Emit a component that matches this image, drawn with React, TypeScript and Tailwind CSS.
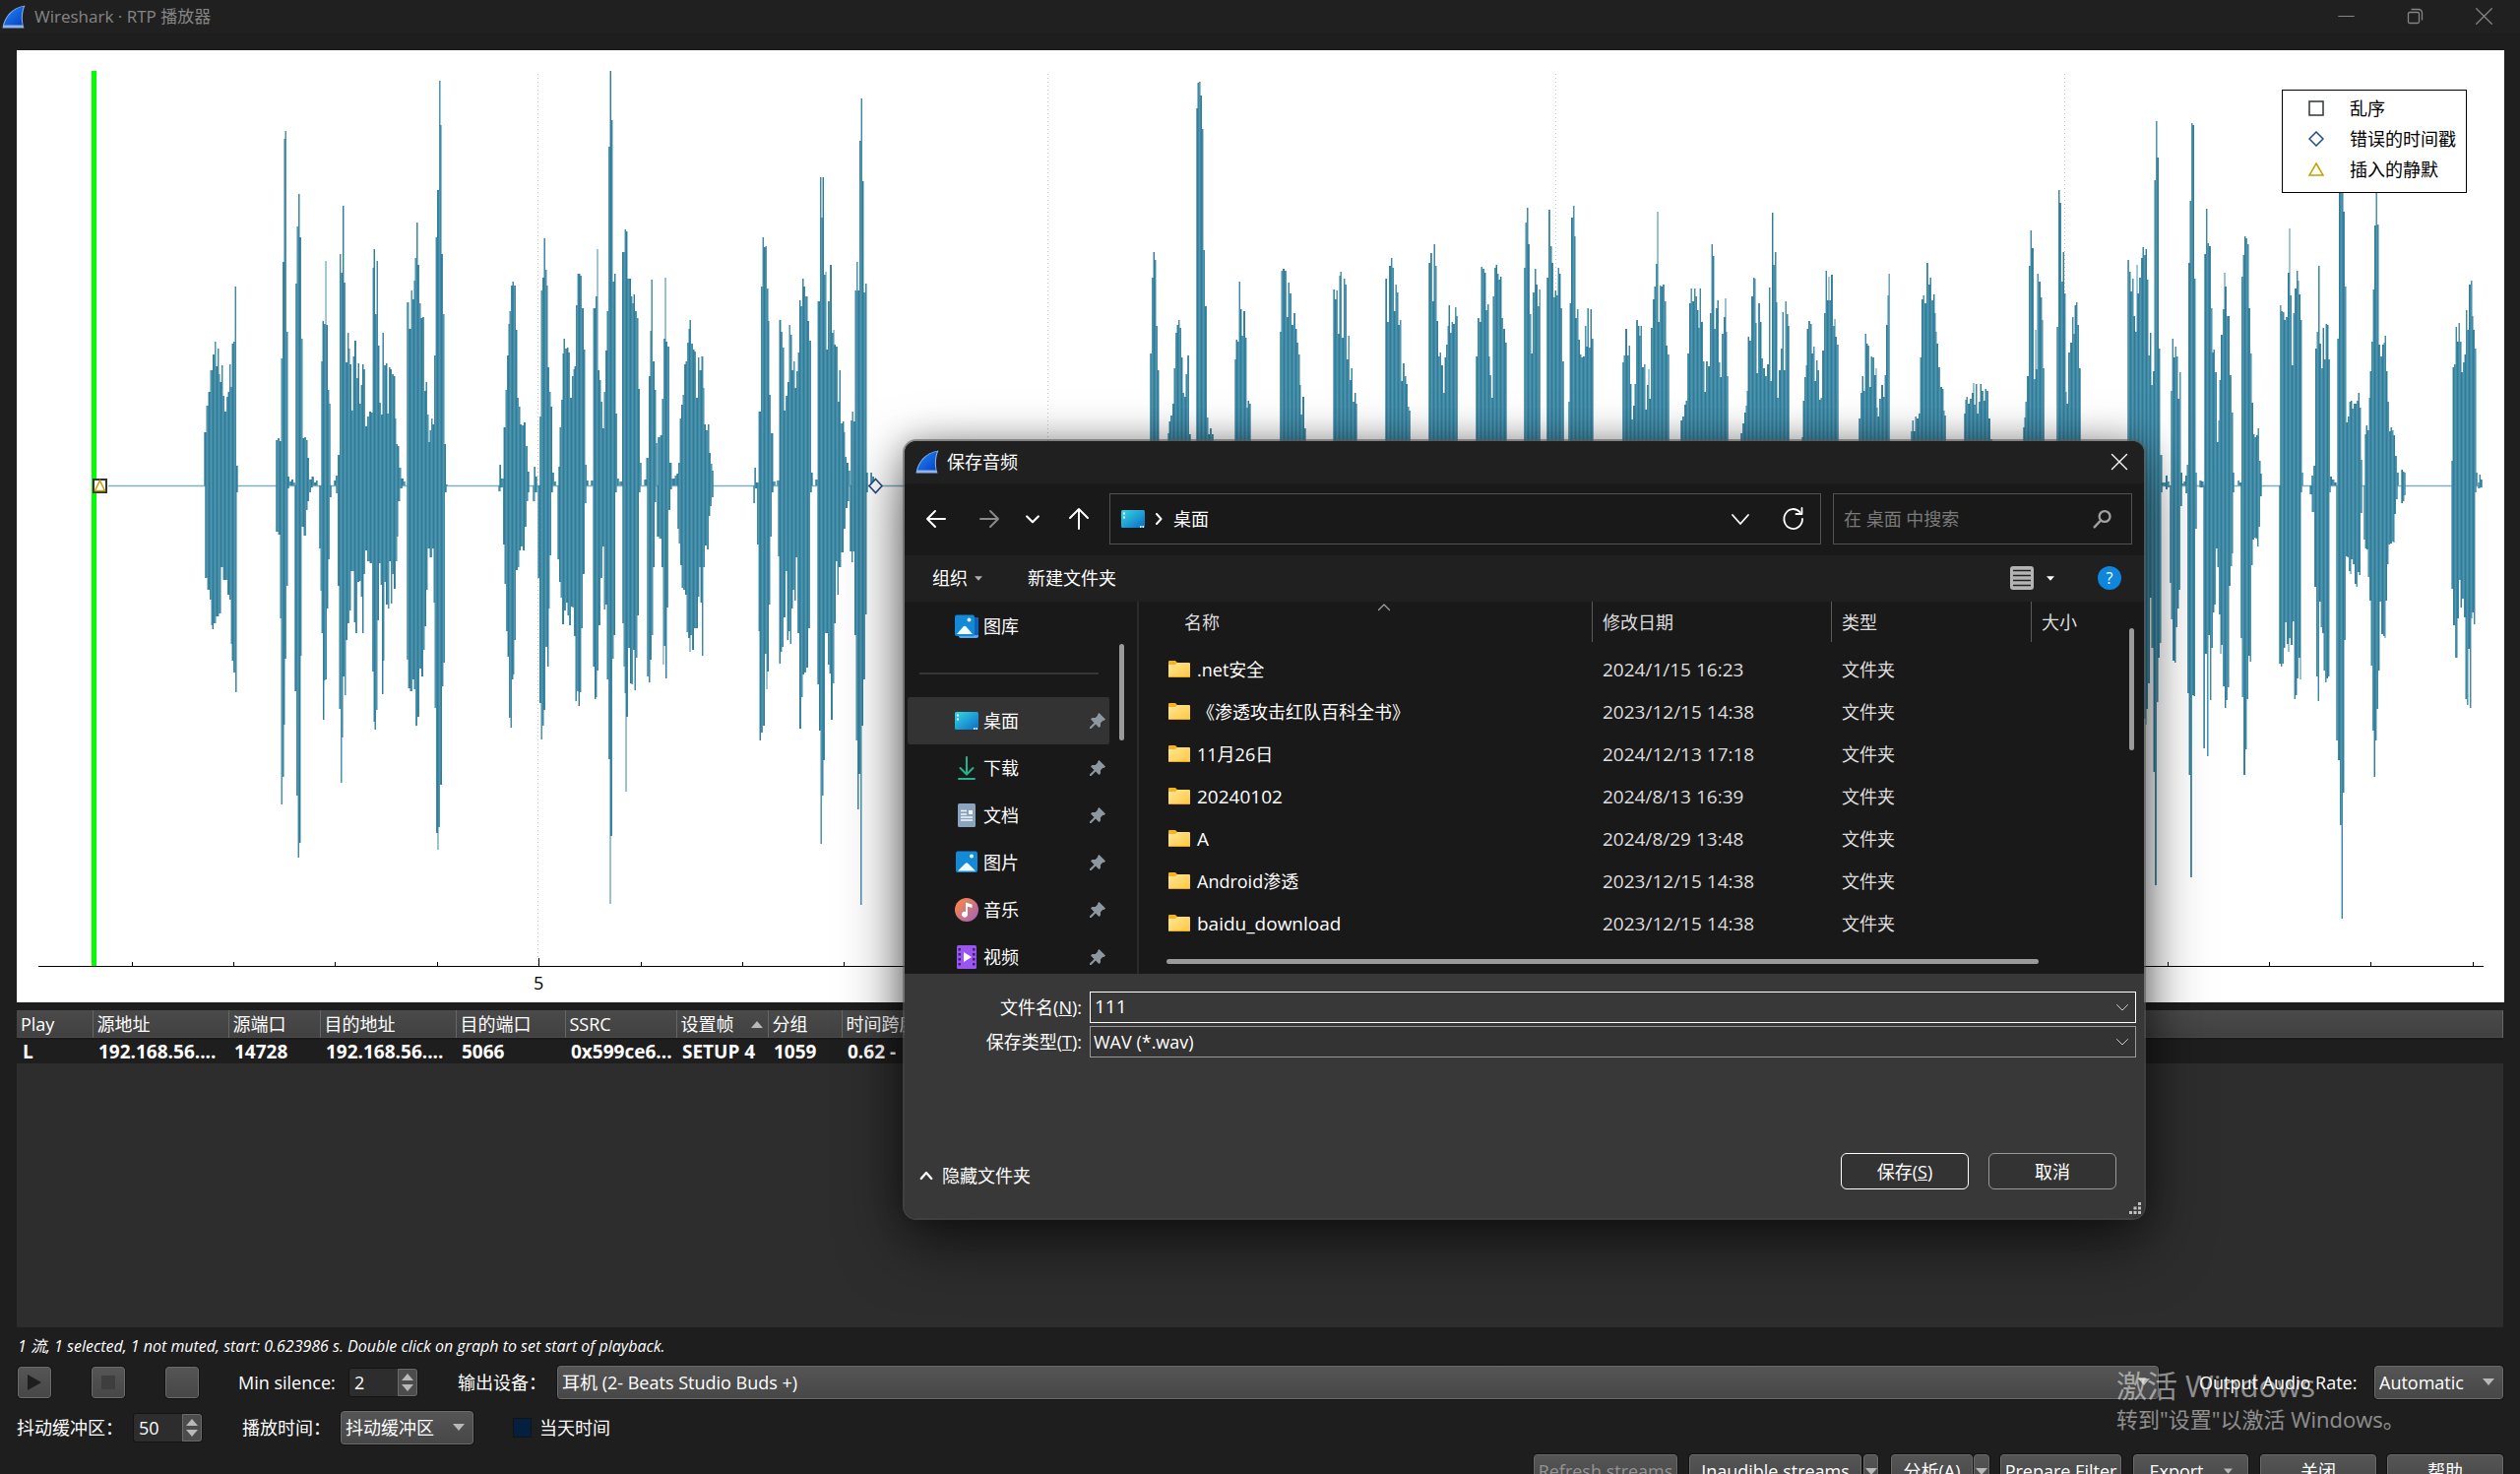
import React from "react";

/* ---------- Audio wave form ---------- */

const BASELINE = 493;

/* Peaks of each burst, above and below the base line, as "x,y" pairs. */
const BURSTS: [string, string][] = [
  [
    "208,439 211,412 212,398 215,376 217,360 219,347 220,372 222,354 223,380 224,388 226,371 227,402 229,418 231,403 232,398 234,370 235,393 236,349 238,347 239,291 241,473",
    "209,587 212,599 214,609 215,635 216,639 218,633 221,626 224,623 225,576 228,589 230,589 232,604 234,609 235,654 236,671 238,683 240,703 241,500",
  ],
  [
    "281,447 283,445 285,448 286,364 288,266 289,141 290,133 292,337 293,484 295,489 297,487 299,490",
    "281,540 284,543 285,628 286,817 288,789 289,736 290,669 292,595 293,496",
  ],
  [
    "301,288 302,230 304,197 305,241 307,344 308,445 310,444 312,447 313,465 315,487 318,484 320,490 322,488",
    "300,702 302,808 303,871 305,856 306,666 307,535 310,544 312,518 313,509 315,500 317,495",
  ],
  [
    "327,367 328,326 330,329 331,265 332,330 334,396 335,410",
    "325,557 326,600 327,643 329,731 330,691 331,690 333,618 334,568 336,505",
  ],
  [
    "340,488 342,483 344,462 346,258 347,277 349,209 350,287 352,368 354,338 355,354 356,370 358,417 359,362 361,346 363,384 364,369 366,410 367,391 369,370 370,375 372,433 374,423 376,418 378,419 379,272 380,253 382,319 383,265 385,351 386,409 388,421 389,338 391,371 393,369 394,420 396,373 397,375 399,380 401,382 402,425 403,451 405,453 406,475 409,486 411,489",
    "342,501 344,595 345,720 347,795 348,749 349,687 351,706 352,650 354,633 356,620 357,580 359,580 360,632 362,643 364,591 366,590 367,606 369,643 370,583 372,559 374,570 377,572 379,682 380,733 381,741 383,721 384,630 386,572 387,594 389,705 390,671 391,591 393,614 395,618 396,570 398,613 399,583 401,598 403,570 404,545 405,509 408,496",
  ],
  [
    "414,307 417,334 418,295 420,304 421,285 422,262 424,226 425,269 427,308 428,323 430,322 432,397 433,388 435,421 436,449 437,437 439,425 440,431 442,361 443,241 445,193 447,82 448,127 449,258 451,319 452,451 454,492",
    "414,670 415,699 418,702 420,690 421,700 423,737 425,728 427,679 429,687 431,660 432,636 434,599 435,557 438,566 440,557 441,612 442,719 444,846 445,863 446,840 448,797 450,697 451,673 453,500",
  ],
  [
    "508,472 510,486 513,434 514,396 516,361 517,329 518,316 520,290 521,286 523,290 525,335 526,404 528,413 529,431 531,432 533,429 535,453 537,479",
    "507,499 510,495 512,553 513,593 515,641 516,667 518,729 519,739 521,690 522,685 523,650 525,579 527,576 528,559 530,555 532,559 534,535 536,509 537,500",
  ],
  ["543,474 545,484", "542,509 545,500"],
  [
    "549,423 550,295 552,282 553,242 555,274 556,290 557,373 559,398 560,413 562,480 564,489",
    "547,587 549,714 550,751 552,737 553,721 555,657 557,677 558,618 559,564 561,500",
  ],
  [
    "568,474 569,434 571,406 572,359 573,344 575,354 577,353 578,358 580,404 582,382 583,375 584,372 586,310 587,278 589,278 590,280 592,313 594,355 595,472 597,488",
    "567,568 569,591 570,607 572,634 574,620 576,612 577,625 579,635 581,616 582,617 584,646 585,712 587,702 588,717 590,703 591,638 593,583 595,511",
  ],
  [
    "601,488 604,313 606,301 607,253 608,376 610,386 611,408 613,435 614,398 616,356 617,316 619,149 620,72 622,122 623,286 625,278 626,420 628,486",
    "603,677 605,710 606,708 607,681 609,635 611,587 613,555 614,619 616,614 617,690 619,771 620,918 621,849 623,669 624,645 626,500",
  ],
  [
    "630,489 634,256 635,233 637,235 638,283 640,283 642,301 643,308 644,299 646,316 648,323 649,395 651,470",
    "633,633 634,677 635,704 636,804 637,728 639,658 641,694 642,695 644,660 645,701 647,668 648,625 650,500",
  ],
  [
    "655,487 658,465 660,382 661,336 662,284 664,367 666,396 667,450",
    "658,687 660,693 661,670 663,645 664,576 666,510",
  ],
  [
    "669,444 672,442 673,405 675,344 676,282 677,347 679,352 681,470 684,486 687,483",
    "668,545 671,547 673,576 674,675 675,656 677,689 678,617 680,518 682,497",
  ],
  [
    "688,481 690,470 691,425 693,411 694,401 696,370 697,367 699,348 700,334 701,325 703,349 705,355 706,357 708,404 710,363 711,376 714,362 715,394 716,431 718,437 720,431 721,460 723,471 724,478",
    "689,537 690,552 692,574 693,597 695,599 697,604 698,642 700,648 701,662 702,645 704,660 706,638 708,638 710,606 711,576 712,612 714,666 715,576 717,554 719,558 721,524 722,514 724,505",
  ],
  [
    "767,475 769,490 772,418 774,291 775,241 777,251 778,250 780,293 781,326 782,401 784,440 787,489",
    "766,511 768,496 770,553 771,641 772,752 774,744 776,737 778,664 779,700 780,682 782,614 783,545 785,500",
  ],
  [
    "790,488 793,325 794,337 796,353 797,417 799,402 801,388 802,330 804,340 805,376 807,367 808,394 810,377 811,358 813,305 814,311 816,283 817,291 819,301 820,301 821,326 823,346 825,480",
    "791,565 792,674 794,662 795,657 797,627 799,580 800,650 802,641 803,654 805,618 806,599 808,610 809,566 811,643 813,740 815,708 816,685 818,683 820,678 822,638 824,500",
  ],
  [
    "829,487 832,306 834,180 835,221 836,180 838,279 839,276 840,355 842,306 844,269 846,338 847,335 848,350 850,352 852,408 853,376 855,430 857,428 858,439 859,464 861,470 863,478",
    "831,695 833,742 834,857 836,808 837,772 839,643 840,643 842,675 843,684 845,731 847,694 848,633 850,570 851,604 853,576 856,561 858,537 860,516 862,509",
  ],
  [
    "865,427 866,418 868,428 869,295 871,266 872,295 874,143 875,100 877,184 878,297 880,288 881,480",
    "864,560 866,571 867,560 869,645 870,752 872,822 873,786 875,919 876,737 878,690 880,624 881,500",
  ],
  ["885,480 887,484 889,488", "885,496 889,496"],
  ["1169,359 1171,282 1172,256 1174,264 1175,331 1177,376 1178,450", "1169,540 1178,540"],
  [
    "1187,440 1188,428 1190,422 1192,410 1193,374 1195,338 1196,330 1198,325 1199,333 1201,363 1202,399 1204,403 1205,380 1207,361 1209,441",
    "1187,540 1209,540",
  ],
  [
    "1216,110 1217,84 1219,83 1220,97 1222,131 1223,254 1225,311 1227,424 1228,441 1230,435 1232,441",
    "1216,540 1232,540",
  ],
  [
    "1255,365 1256,345 1258,347 1259,286 1261,314 1262,341 1264,316 1266,343 1267,414 1268,407 1270,410",
    "1255,540 1270,540",
  ],
  [
    "1301,337 1302,275 1304,273 1306,275 1308,322 1309,287 1311,298 1313,330 1315,318 1317,334 1318,348 1320,360 1321,391 1322,421 1324,403 1326,435",
    "1301,540 1326,540",
  ],
  [
    "1355,294 1357,304 1358,295 1360,339 1361,280 1362,276 1364,343 1366,283 1367,289 1369,365 1370,341 1372,386 1373,374 1375,408 1377,399 1378,410",
    "1355,540 1378,540",
  ],
  [
    "1408,283 1410,327 1412,270 1414,262 1415,272 1417,316 1418,289 1420,297 1421,330 1423,325 1424,387 1426,369 1428,382 1429,390 1431,413 1432,417",
    "1408,540 1432,540",
  ],
  [
    "1452,267 1454,257 1456,306 1457,248 1459,270 1460,326 1462,362 1463,358 1465,371 1467,399 1468,363 1470,350 1471,331 1472,310 1474,338 1475,327 1477,329 1479,312 1480,321",
    "1452,540 1480,540",
  ],
  [
    "1500,362 1502,323 1504,327 1505,271 1507,273 1509,277 1510,315 1512,309 1513,362 1514,381 1516,404 1517,301 1519,272 1520,269 1522,278 1523,284 1525,281 1526,323 1528,334 1530,348",
    "1500,540 1530,540",
  ],
  [
    "1549,272 1550,226 1552,211 1553,248 1555,319 1556,359 1558,297 1560,273 1561,289 1563,311 1564,294",
    "1549,540 1564,540",
  ],
  [
    "1572,282 1574,213 1576,250 1577,267 1579,302 1580,295 1582,300 1583,272 1585,278 1586,313 1588,367",
    "1572,540 1588,540",
  ],
  [
    "1594,408 1595,308 1597,221 1599,209 1600,240 1601,323 1603,314 1604,345 1606,360 1607,363 1609,362 1611,331 1612,352 1613,313 1615,353 1616,314 1618,344",
    "1594,540 1618,540",
  ],
  [
    "1649,368 1650,361 1652,334 1654,361 1655,351 1657,390 1658,426 1660,412 1661,390 1663,325 1665,331 1666,341 1667,331 1669,373 1671,370 1672,416 1674,391 1675,375 1676,405 1678,333 1680,304 1681,291 1683,268 1684,215 1685,327 1687,290 1688,291 1690,289 1692,306 1693,351 1695,360",
    "1649,540 1695,540",
  ],
  [
    "1708,427 1710,423 1712,411 1713,407 1715,359 1717,308 1718,293 1720,306 1722,293 1723,301 1725,315 1726,333 1727,293 1729,327 1731,367 1732,398 1734,367 1736,372 1738,318 1739,248 1741,260 1742,334 1744,313 1745,305 1747,368 1748,383 1750,339 1752,322 1753,303 1754,337 1755,382",
    "1708,540 1755,540",
  ],
  [
    "1769,440 1771,430 1773,419 1774,412 1775,397 1776,342 1778,346 1780,301 1782,282 1783,283 1784,328 1785,379 1787,308 1789,327 1790,364 1792,374 1794,382 1796,370 1798,292 1799,387 1801,216 1802,269 1804,256 1805,307 1806,404 1808,376 1810,354 1811,317 1813,376 1814,306 1816,319 1817,331",
    "1769,540 1817,540",
  ],
  [
    "1831,444 1832,407 1834,383 1835,371 1836,334 1838,326 1840,329 1841,359 1843,352 1844,387 1846,366 1847,376 1849,406 1850,404 1852,356 1854,318 1855,275 1857,305 1858,281 1859,305 1861,279 1863,331 1864,324 1865,342 1867,350",
    "1831,540 1867,540",
  ],
  [
    "1889,425 1891,399 1892,382 1894,397 1895,339 1897,349 1898,351 1900,393 1901,362 1903,363 1905,381 1906,374 1907,414 1908,423 1910,405 1912,391 1914,403 1915,381 1917,330 1918,300 1919,278",
    "1889,540 1919,540",
  ],
  [
    "1942,438 1943,427 1945,438 1946,423 1948,425 1950,420 1951,363 1953,304 1954,300 1956,308 1958,267 1960,289 1961,282 1963,305 1965,299 1966,318 1967,337 1968,349 1970,373 1972,393 1974,395 1975,417 1976,422",
    "1942,540 1976,540",
  ],
  [
    "1996,420 1997,406 1998,403 2000,410 2002,405 2004,399 2005,389 2006,411 2008,390 2009,420 2011,408 2012,390 2014,397 2016,407 2017,395 2019,397 2021,425 2023,446",
    "1996,540 2023,540",
  ],
  [
    "2056,434 2057,424 2058,408 2060,382 2062,270 2063,234 2065,252 2067,385 2068,335 2069,375 2070,278 2072,286 2074,302 2075,325 2076,374",
    "2056,540 2076,540",
  ],
  [
    "2090,332 2092,193 2093,206 2095,286 2096,256 2098,298 2099,398 2100,410 2102,358 2104,348 2106,322 2107,339 2108,310 2110,307 2111,330 2113,374",
    "2090,540 2113,540",
  ],
  [
    "2162,264 2164,276 2165,296 2167,283 2168,321 2170,337 2171,269 2172,298 2174,282 2176,262 2177,251 2179,259 2180,253 2182,284 2183,361 2185,338 2186,391 2188,377 2189,183 2191,123 2192,160 2194,354 2195,462 2198,490",
    "2162,700 2177,710 2179,730 2180,736 2181,720 2183,694 2185,607 2186,658 2187,658 2188,784 2190,899 2192,713 2193,668 2195,653 2196,500",
  ],
  ["2199,490 2201,483 2203,489", "2199,494 2201,497 2203,495"],
  [
    "2206,397 2207,344 2209,363 2210,352 2212,362 2213,405 2215,378 2216,480 2218,491",
    "2205,592 2206,629 2208,671 2210,673 2211,637 2213,618 2214,599 2216,514",
  ],
  [
    "2219,489 2221,483 2222,472 2224,267 2225,204 2227,125 2228,127 2230,283 2231,480",
    "2221,501 2223,704 2224,787 2226,891 2228,706 2229,707 2231,537",
  ],
  ["2235,488 2238,489", "2235,495 2238,495"],
  [
    "2240,258 2242,212 2243,247 2245,250 2247,313 2248,358 2249,355 2251,378 2253,449 2254,427 2255,386 2257,340 2259,314 2260,277 2261,291 2263,321 2264,321 2266,381 2268,419 2269,480",
    "2239,760 2241,664 2243,768 2244,645 2246,711 2247,658 2249,622 2250,614 2252,557 2253,576 2255,624 2256,664 2257,655 2259,697 2261,719 2262,711 2264,698 2265,595 2267,575 2268,562 2269,500",
  ],
  [
    "2274,488 2276,490 2278,281 2279,259 2281,240 2282,242 2284,248 2285,313 2287,359 2288,409 2290,441 2291,444 2293,442 2294,435 2296,468 2297,481",
    "2277,648 2278,708 2280,787 2282,761 2283,710 2285,666 2286,672 2288,574 2289,548 2291,546 2292,547 2294,555 2295,535 2297,504",
  ],
  [
    "2317,310 2318,316 2320,317 2321,325 2323,322 2325,277 2326,232 2327,300 2329,371 2330,318 2332,293 2334,275 2335,285 2336,299 2338,325 2339,480",
    "2316,674 2318,677 2319,674 2321,658 2322,632 2324,654 2325,662 2326,648 2328,655 2330,631 2331,710 2333,706 2334,689 2336,668 2337,690 2338,500",
  ],
  [
    "2349,483 2351,473 2353,354 2354,337 2356,270 2357,349 2359,374 2360,333 2362,365 2363,329 2365,330 2366,365 2368,484 2370,487 2373,490",
    "2347,502 2350,520 2352,596 2354,687 2355,712 2357,611 2358,637 2360,643 2361,681 2363,693 2364,689 2366,687 2367,500",
  ],
  [
    "2375,344 2377,150 2379,140 2380,150 2381,215 2383,291 2384,429 2386,423 2387,408 2389,407 2390,415 2392,410 2393,410 2395,407 2396,399 2398,414 2399,467",
    "2374,752 2376,772 2378,838 2379,933 2381,805 2382,650 2384,565 2385,566 2387,580 2388,583 2389,568 2391,573 2393,593 2394,596 2396,581 2397,584 2399,521",
  ],
  [
    "2403,441 2404,432 2406,437 2407,404 2408,377 2410,347 2411,294 2413,229 2414,165 2416,228 2417,350 2419,362 2421,350 2422,348 2423,341 2425,377 2426,408 2428,438 2429,434 2431,437 2432,442 2434,463 2436,480",
    "2402,548 2403,557 2405,558 2406,586 2408,610 2409,676 2411,742 2412,789 2414,752 2415,720 2417,681 2418,611 2420,644 2422,646 2423,648 2424,610 2426,573 2427,553 2429,552 2431,550 2432,551 2433,522 2435,507",
  ],
  ["2440,477 2442,479 2443,480", "2440,511 2442,509 2443,503"],
  [
    "2491,468 2492,373 2494,370 2495,332 2497,347 2498,328 2500,347 2501,378 2503,368 2504,360 2506,315 2507,335 2509,289 2511,285 2512,321 2513,335 2515,354 2516,480",
    "2491,598 2493,635 2495,668 2496,668 2497,628 2499,589 2500,617 2502,608 2504,627 2505,710 2507,716 2508,659 2510,719 2511,628 2512,622 2514,634 2515,500",
  ],
  ["2518,490 2519,482 2521,487", "2518,496 2521,495"],
];

/* Turns a list of peaks into a run of bars that stand on the base line. */
function bars(peaks: string): string {
  const p = peaks.split(" ").map((s) => s.split(",").map(Number));
  let d = `M${p[0][0] - 0.75} ${BASELINE}`;
  p.forEach(([x, y], i) => {
    const right = i + 1 < p.length ? (x + p[i + 1][0]) / 2 : x + 0.75;
    d += `V${y}H${right}`;
  });
  return d + `V${BASELINE}Z`;
}

const WAVE = BURSTS.map(([top, bottom]) => bars(top) + bars(bottom)).join("");

const TICKS = Array.from({ length: 24 }, (_, i) => Math.round(133.5 + i * 103.4));
const GRID = [546, 1064, 1580, 2097];

function Chart() {
  return (
    <div className="relative mx-[17px] mr-4 h-[967px] shrink-0 bg-white">
      <svg className="block h-full w-full" viewBox="17 51 2527 967" preserveAspectRatio="none" role="img" aria-label="Wave form">
        <defs>
          <pattern id="stripes" width="4" height="8" patternUnits="userSpaceOnUse">
            <rect width="4" height="8" fill="#3f89a5" />
            <rect width="1" height="8" fill="#307d9b" />
            <rect x="2" width="1" height="8" fill="#5095ae" />
          </pattern>
        </defs>
        {GRID.map((x) => (
          <line key={x} x1={x + 0.5} x2={x + 0.5} y1="75" y2="981" stroke="#c4c4c4" strokeDasharray="1 3" />
        ))}
        <path d={`M110 ${BASELINE + 0.5}H2520`} stroke="#7db0c2" strokeWidth="1.5" />
        <path d={WAVE} fill="url(#stripes)" />
        <rect x="93" y="72" width="5" height="909" fill="#00ff00" />
        <path d="M39 981.5H2523" stroke="#000" />
        {TICKS.map((x) => (
          <path key={x} d={`M${x + 0.5} 981V${GRID.some((g) => Math.abs(g - x) < 3) ? 973 : 977}`} stroke="#000" />
        ))}
        <g fill="#fff">
          <rect x="95" y="487" width="13" height="13" stroke="#2e3436" strokeWidth="2" />
          <path d="M101.500 488L106.500 498.500H96.500Z" stroke="#c4a000" strokeWidth="1.500" />
          <path d="M889.500 486.500L896 493.500L889.500 500.500L883 493.500Z" stroke="#204a87" strokeWidth="1.600" />
        </g>
      </svg>
      <span className="absolute bottom-2 left-[525px] text-[18px] leading-6 text-black">5</span>
      <ul className="absolute right-[38px] top-10 flex h-[105px] flex-col justify-start gap-[3px] border border-black bg-white pl-[26px] pr-[10px] pt-1 text-[18px] leading-7 text-black">
        <li className="flex items-center gap-[26px]">
          <svg className="size-4" viewBox="0 0 16 16" fill="none"><rect x="1" y="1" width="14" height="14" stroke="#2e3436" strokeWidth="1.5" /></svg>
          乱序
        </li>
        <li className="flex items-center gap-[26px]">
          <svg className="size-4" viewBox="0 0 16 16" fill="none"><path d="M8 1L15 8L8 15L1 8Z" stroke="#204a87" strokeWidth="1.5" /></svg>
          错误的时间戳
        </li>
        <li className="flex items-center gap-[26px]">
          <svg className="size-4" viewBox="0 0 16 16" fill="none"><path d="M8 2L15 14H1Z" stroke="#c4a000" strokeWidth="1.5" /></svg>
          插入的静默
        </li>
      </ul>
    </div>
  );
}

/* ---------- Icons ---------- */

function Fin({ className }: { className: string }) {
  return (
    <svg className={className} viewBox="0 0 24 24">
      <defs>
        <linearGradient id="fin" x1="0" y1="0" x2="1" y2="1">
          <stop offset="0" stopColor="#1f8bff" />
          <stop offset="1" stopColor="#0a3fbf" />
        </linearGradient>
      </defs>
      <path d="M0.500 23.500C2 13 9 2.500 23.500 0.500C20.500 7 20 16 22.500 23.500Z" fill="#8fb4e8" />
      <path d="M2 20.500C4.500 11.500 11 3.500 22 1.500C19.500 8 19.300 15 20.800 20.500Z" fill="url(#fin)" />
    </svg>
  );
}

function Stroke({ d, className, w = 1.5 }: { d: string; className: string; w?: number }) {
  return (
    <svg className={className} viewBox="0 0 24 24" fill="none" stroke="currentColor" strokeWidth={w} strokeLinecap="round" strokeLinejoin="round">
      <path d={d} />
    </svg>
  );
}

function Caret({ up = false, className = "" }: { up?: boolean; className?: string }) {
  return (
    <svg className={`h-[7px] w-3 ${className}`} viewBox="0 0 12 7" fill="currentColor">
      <path d={up ? "M6 0L12 7H0Z" : "M0 0H12L6 7Z"} />
    </svg>
  );
}

function DesktopIcon() {
  return (
    <svg className="h-[18px] w-6" viewBox="0 0 24 18">
      <defs>
        <linearGradient id="desk" x1="0" y1="0" x2="1" y2="1">
          <stop offset="0" stopColor="#36d6e2" />
          <stop offset="1" stopColor="#0b6cc4" />
        </linearGradient>
      </defs>
      <rect width="24" height="18" rx="1.500" fill="url(#desk)" />
      <path d="M2 2.500h2v2H2zM2 6.500h2v2H2zM19 16h1.500v2H19zM21.500 16H23v2h-1.500z" fill="#e9fbff" />
    </svg>
  );
}

function PictureIcon({ stacked = false }: { stacked?: boolean }) {
  return (
    <svg className="size-6" viewBox="0 0 24 24">
      {stacked && <path d="M4 20h16V3h2a2 2 0 0 1 2 2v17a2 2 0 0 1-2 2H6a2 2 0 0 1-2-2z" fill="#5ba7ea" />}
      {stacked && <path d="M20 3h2a2 2 0 0 1 2 2v16h-4z" fill="#0f62b5" />}
      <rect x={stacked ? 0 : 1} y="0.500" width={stacked ? 20 : 22} height="21.500" rx="2" fill="#1489d8" />
      <path d={stacked ? "M2 20L8.500 12.500Q10 11 11.500 12.500L18 20Z" : "M3 20.500L10.500 13Q12 11.500 13.500 13L21 20.500Z"} fill="#f2f9ff" />
      <circle cx={stacked ? 14.500 : 17} cy="5.500" r="2" fill="#e6f5ff" />
    </svg>
  );
}

function DownloadIcon() {
  return (
    <svg className="size-6" viewBox="0 0 24 24" fill="none" stroke="#20b58f" strokeWidth="2" strokeLinecap="round" strokeLinejoin="round">
      <path d="M12 1V18M5.500 12L12 18.500L18.500 12M4 23H20" />
    </svg>
  );
}

function DocIcon() {
  return (
    <svg className="size-6" viewBox="0 0 24 24">
      <rect x="3" width="18" height="24" rx="1.500" fill="#8aa3bf" />
      <path d="M6 7.500h6M6 11h6M6 14h12M6 17h12" stroke="#f3f7fb" strokeWidth="1.300" />
      <path d="M14 7h4v4h-4z" fill="#f3f7fb" />
    </svg>
  );
}

function MusicIcon() {
  return (
    <svg className="size-6" viewBox="0 0 24 24">
      <defs>
        <linearGradient id="music" x1="0" y1="0" x2="1" y2="1">
          <stop offset="0.200" stopColor="#ef8354" />
          <stop offset="1" stopColor="#9d5fc0" />
        </linearGradient>
      </defs>
      <circle cx="12" cy="12" r="12" fill="url(#music)" />
      <path d="M11 4.500L17.500 6.500V10L13 8.700V16.500A3 3 0 1 1 11 13.900Z" fill="#fff" />
    </svg>
  );
}

function VideoIcon() {
  return (
    <svg className="size-6" viewBox="0 0 24 24">
      <rect x="2" width="20" height="24" rx="1.500" fill="#9c56f0" />
      <path d="M3.500 3h2.500v2.500H3.500zM3.500 8h2.500v2.500H3.500zM3.500 13h2.500v2.500H3.500zM3.500 18h2.500v2.500H3.500zM18 3h2.500v2.500H18zM18 8h2.500v2.500H18zM18 13h2.500v2.500H18zM18 18h2.500v2.500H18z" fill="#3b1d78" />
      <path d="M9 7L17 12L9 17Z" fill="#fff" />
    </svg>
  );
}

function Pin() {
  return (
    <svg className="size-4" viewBox="0 0 16 16" fill="#8d979f">
      <path d="M9.500 0L16 6.500L14.500 8L13.500 7.800L11 10.300L11 13.500L9.500 15L6 11.500L1.500 16H0V14.500L4.500 10L1 6.500L2.500 5L5.700 5L8.200 2.500L8 1.500Z" />
    </svg>
  );
}

function Folder() {
  return (
    <svg className="h-[17px] w-[22px]" viewBox="0 0 22 17">
      <defs>
        <linearGradient id="folder" x1="0" y1="0" x2="1" y2="1">
          <stop offset="0" stopColor="#ffe69a" />
          <stop offset="1" stopColor="#ffc83d" />
        </linearGradient>
      </defs>
      <path d="M0 1a1 1 0 0 1 1-1h6l2 2v4H0z" fill="#f5b417" />
      <path d="M0 4h7l2-2h12a1 1 0 0 1 1 1v13a1 1 0 0 1-1 1H1a1 1 0 0 1-1-1z" fill="url(#folder)" />
      <path d="M0 16h22a1 1 0 0 1-1 1H1a1 1 0 0 1-1-1z" fill="#e9a820" />
    </svg>
  );
}

/* ---------- Save dialog ---------- */

const PLACES: [string, React.ReactNode][] = [
  ["桌面", <DesktopIcon />],
  ["下载", <DownloadIcon />],
  ["文档", <DocIcon />],
  ["图片", <PictureIcon />],
  ["音乐", <MusicIcon />],
  ["视频", <VideoIcon />],
];

const FILES: [string, string][] = [
  [".net安全", "2024/1/15 16:23"],
  ["《渗透攻击红队百科全书》", "2023/12/15 14:38"],
  ["11月26日", "2024/12/13 17:18"],
  ["20240102", "2024/8/13 16:39"],
  ["A", "2024/8/29 13:48"],
  ["Android渗透", "2023/12/15 14:38"],
  ["baidu_download", "2023/12/15 14:38"],
];

function SaveDialog() {
  return (
    <section
      role="dialog"
      aria-label="保存音频"
      className="absolute left-[919px] top-[448px] flex h-[789px] w-[1259px] flex-col overflow-hidden rounded-xl bg-[#191919] text-[18px] leading-6 text-white shadow-[0_0_0_2px_rgba(90,90,90,0.6),0_0_32px_rgba(0,0,0,0.3),0_24px_64px_rgba(0,0,0,0.6)]"
    >
      <header className="flex h-[43px] shrink-0 items-center bg-[#202020] pb-px pl-[11px] pr-[15px]">
        <Fin className="size-6" />
        <h2 className="ml-2 flex-1">保存音频</h2>
        <button aria-label="关闭对话框"><Stroke className="size-5" d="M3 3L21 21M21 3L3 21" w={1.6} /></button>
      </header>

      <div className="flex h-[73px] shrink-0 items-center pb-px pl-5 pr-3">
        <button aria-label="后退"><Stroke className="size-6" d="M21 12H3M11 4L3 12L11 20" w={2} /></button>
        <button aria-label="前进" className="ml-[30px] text-[#8a8a8a]"><Stroke className="size-6" d="M3 12H21M13 4L21 12L13 20" w={2} /></button>
        <button aria-label="最近位置" className="ml-[22px]"><Stroke className="size-5" d="M5 9L12 16L19 9" w={2.6} /></button>
        <button aria-label="上一级" className="ml-[25px]"><Stroke className="size-6" d="M12 22V2M3 11L12 2L21 11" w={2} /></button>
        <div className="ml-[19px] flex h-[52px] flex-1 items-center border border-[#535353] pl-[11px] pr-[15px]">
          <DesktopIcon />
          <Stroke className="ml-2 size-3" d="M8 2L17 12L8 22" w={4} />
          <span className="ml-[9px] flex-1">桌面</span>
          <button aria-label="历史"><Stroke className="size-6" d="M4 8L12 17L20 8" w={1.8} /></button>
          <button aria-label="刷新" className="ml-[30px]"><Stroke className="size-6" d="M21 12A9.300 10 0 1 1 18.500 5.200M20.500 1V7H14.500" w={1.8} /></button>
        </div>
        <label className="ml-3 flex h-[52px] w-[304px] items-center border border-[#535353] pl-[10px] pr-[19px]">
          <input className="w-0 flex-1 bg-transparent outline-none placeholder:text-[#7a7a7a]" placeholder="在 桌面 中搜索" aria-label="搜索" />
          <Stroke className="size-5 text-[#a0a0a0]" d="M21 9A6.500 6.500 0 1 1 8 9A6.500 6.500 0 1 1 21 9M9.500 14L2 22" w={2.8} />
        </label>
      </div>

      <div className="flex h-[47px] shrink-0 items-center bg-[#202020] pb-px pl-7 pr-[23px]">
        <button className="flex items-center gap-[7px]">组织<Caret className="h-[5px]! w-2! text-[#b0b0b0]" /></button>
        <button className="ml-[46px]">新建文件夹</button>
        <button aria-label="视图" className="ml-auto">
          <svg className="size-6" viewBox="0 0 24 24"><rect width="24" height="24" rx="3" fill="#b4b4b4" /><path d="M3 4.500h18M3 9.500h18M3 14.500h18M3 19.500h18" stroke="#202020" strokeWidth="1.500" /></svg>
        </button>
        <button aria-label="更多视图" className="ml-[13px]"><Caret className="h-[5px]! w-2!" /></button>
        <button aria-label="帮助" className="ml-11 size-6 rounded-full bg-[#0f86dc] text-[16px]">?</button>
      </div>

      <div className="flex h-[378px] shrink-0 overflow-hidden">
        <nav className="w-[208px] shrink-0 pl-[3px]">
          <a href="#gallery" className="flex h-[50px] items-center gap-[5px] pl-[48px]"><PictureIcon stacked />图库</a>
          <hr className="ml-3 mr-[11px] mt-[22px] border-t-2 border-[#363636]" />
          <ul className="mt-[23px]">
            {PLACES.map(([name, icon], i) => (
              <li key={name}>
                <a href="#place" className={`flex h-12 items-center gap-[5px] rounded-xs pl-[48px] pr-1 ${i === 0 ? "bg-[#333333]" : ""}`}>
                  {icon}
                  <span className="flex-1">{name}</span>
                  <Pin />
                </a>
              </li>
            ))}
          </ul>
        </nav>
        <div className="flex w-[30px] shrink-0 justify-center border-r-2 border-[#2b2b2b] pr-1 pt-[43px]">
          <div className="h-[98px] w-[5px] rounded-full bg-[#9a9a9a]" />
        </div>
        <div className="flex min-w-0 flex-1 flex-col">
          <div className="relative flex-1">
            <Stroke className="absolute left-[243px] top-0 size-3 text-[#a0a0a0]" d="M1 17L12 6L23 17" w={2.5} />
            <table className="w-full table-fixed border-collapse text-left">
              <colgroup>
                <col className="w-[461px]" />
                <col className="w-[243px]" />
                <col className="w-[203px]" />
                <col />
              </colgroup>
              <thead>
                <tr className="h-[47px] align-top text-[#dedede] [&>th]:p-0 [&>th]:font-normal [&>th>div]:h-[41px] [&>th>div]:pt-[9px]">
                  <th><div className="border-r border-[#5a5a5a] pl-[46px]">名称</div></th>
                  <th><div className="border-r border-[#5a5a5a] pl-[10px]">修改日期</div></th>
                  <th><div className="border-r border-[#5a5a5a] pl-[10px]">类型</div></th>
                  <th><div className="pl-[10px]">大小</div></th>
                </tr>
              </thead>
              <tbody>
                {FILES.map(([name, date]) => (
                  <tr key={name} className="h-[43px] [&>td]:p-0">
                    <td>
                      <div className={`flex items-center gap-[7px] whitespace-nowrap pl-[30px] ${/^\w+$/.test(name) ? "text-[19px]" : ""}`}>
                        <Folder />
                        {name}
                      </div>
                    </td>
                    <td className="text-[#dedede]"><div className="pl-[10px] text-[19px]">{date}</div></td>
                    <td className="text-[#dedede]"><div className="pl-[10px]">文件夹</div></td>
                    <td />
                  </tr>
                ))}
              </tbody>
            </table>
          </div>
          <div className="pb-[10px] pl-7"><div className="h-[5px] w-[886px] rounded-full bg-[#9a9a9a]" /></div>
        </div>
        <div className="-ml-[15px] w-[15px] shrink-0 pt-[27px]"><div className="h-[124px] w-[5px] rounded-full bg-[#9a9a9a]" /></div>
      </div>

      <div className="flex flex-1 flex-col bg-[#383838] pb-[29px] pl-[15px] pr-2 pt-[18px]">
        <div className="grid grid-cols-[165px_1fr] items-center gap-x-2 gap-y-[3px] text-right">
          <label htmlFor="file-name">文件名(<u>N</u>):</label>
          <div className="relative">
            <input id="file-name" defaultValue="111" className="block h-8 w-full border border-white bg-[#383838] px-1 pb-0.5 text-[19px] outline-none" />
            <Stroke className="absolute right-2 top-2.5 size-3 text-[#cccccc]" d="M1 7L12 18L23 7" w={2} />
          </div>
          <label htmlFor="file-type">保存类型(<u>T</u>):</label>
          <div className="relative">
            <select id="file-type" className="block h-8 w-full appearance-none border border-[#9a9a9a] bg-[#333333] px-[3px] outline-none">
              <option>WAV (*.wav)</option>
            </select>
            <Stroke className="absolute right-2 top-2.5 size-3 text-[#cccccc]" d="M1 7L12 18L23 7" w={2} />
          </div>
        </div>
        <div className="mt-auto flex items-center gap-5 pr-5">
          <button className="mr-auto flex items-center gap-[9px] pt-2"><Stroke className="size-3.5" d="M3 17L12 7L21 17" w={4} />隐藏文件夹</button>
          <button className="h-[37px] w-[130px] rounded-md border border-white bg-[#333333]">保存(<u>S</u>)</button>
          <button className="h-[37px] w-[130px] rounded-md border border-[#9a9a9a] bg-[#333333]">取消</button>
        </div>
      </div>
      <svg className="absolute bottom-1 right-[3px] size-3" viewBox="0 0 12 12" fill="#c0c0c0">
        <path d="M9 0h3v3H9zM9 4.500h3v3H9zM9 9h3v3H9zM4.500 4.500h3v3h-3zM4.500 9h3v3h-3zM0 9h3v3H0z" />
      </svg>
    </section>
  );
}

/* ---------- Main window ---------- */

const FACE = "border border-[#6a6a6a] bg-linear-to-b from-[#555555] to-[#474747] rounded-[3px] outline outline-[#131313]";

const COLUMNS: [string, string, string][] = [
  ["Play", "L", "w-[77px]"],
  ["源地址", "192.168.56....", "w-[138px]"],
  ["源端口", "14728", "w-[93px]"],
  ["目的地址", "192.168.56....", "w-[138px]"],
  ["目的端口", "5066", "w-[111px]"],
  ["SSRC", "0x599ce6...", "w-[113px]"],
  ["设置帧", "SETUP 4", "w-[93px]"],
  ["分组", "1059", "w-[75px]"],
  ["时间跨度", "0.62 - ", ""],
];

function Spin({ id, value }: { id: string; value: string }) {
  return (
    <div className="flex h-[30px] w-[71px] rounded-[3px] border border-[#131313] bg-[#2d2d2d]">
      <input id={id} defaultValue={value} className="w-0 flex-1 bg-transparent pl-[5px] outline-none" />
      <div className="flex w-5 flex-col items-center justify-evenly rounded-r-[3px] border border-[#6a6a6a] bg-[#4c4c4c] text-[#b8b8b8]">
        <button aria-label="增加"><Caret up className="block" /></button>
        <button aria-label="减少"><Caret className="block" /></button>
      </div>
    </div>
  );
}

function Combo({ id, value, className }: { id: string; value: string; className: string }) {
  return (
    <div className={`relative ${className}`}>
      <select id={id} className={`block h-[34px] w-full appearance-none pb-px pl-1 pr-7 ${FACE}`}>
        <option>{value}</option>
      </select>
      <Caret className="pointer-events-none absolute right-[9px] top-[13px] text-[#b8b8b8]" />
    </div>
  );
}

export default function App() {
  return (
    <main className="relative h-screen overflow-hidden bg-[#1e1e1e] font-['Open_Sans','Noto_Sans_CJK_SC',sans-serif] text-[18px] leading-6 text-white">
      <div className="flex h-[calc(100vh+14px)] flex-col">
        <header className="mb-[18px] flex h-[33px] shrink-0 items-center bg-[#202020] pl-[2px] pr-[28px] text-[#858585]">
          <Fin className="size-6" />
          <h1 className="ml-[9px] flex-1 text-[17px]">Wireshark · RTP 播放器</h1>
          <div className="flex items-center gap-[53px]">
            <button aria-label="最小化"><Stroke className="size-[17px]" d="M1 12H23" w={1.5} /></button>
            <button aria-label="还原">
              <svg className="size-[17px]" viewBox="0 0 17 17" fill="none" stroke="currentColor" strokeWidth="1.300"><rect x="1.500" y="4.500" width="11" height="11" rx="1.500" /><path d="M4.500 1.500H12A3.500 3.500 0 0 1 15.500 5V12.500" /></svg>
            </button>
            <button aria-label="关闭窗口"><Stroke className="size-[17px]" d="M1 1L23 23M23 1L1 23" w={1.8} /></button>
          </div>
        </header>

        <Chart />

        <div className="mx-[17px] mt-2 min-h-0 flex-1 bg-[#2d2d2d]">
          <table className="w-full table-fixed border-collapse text-left">
            <thead>
              <tr className="h-[29px] border-b-2 border-[#1a1a1a] bg-linear-to-b from-[#4a4a4a] to-[#414141]">
                {COLUMNS.map(([name, , width]) => (
                  <th key={name} className={`border-r border-[#666666] pl-1 font-normal whitespace-nowrap ${width}`}>
                    <span className="flex items-center justify-between pr-[5px]">{name}{name === "设置帧" && <Caret up className="text-[#b8b8b8]" />}</span>
                  </th>
                ))}
              </tr>
            </thead>
            <tbody>
              <tr className="h-[25px] bg-[#1e1e1e] font-bold">
                {COLUMNS.map(([name, value]) => (
                  <td key={name} className="overflow-hidden pl-1.5 text-[19px] leading-6 whitespace-nowrap">{value}</td>
                ))}
              </tr>
            </tbody>
          </table>
        </div>

        <p className="ml-[18px] mt-[7px] text-[16px] leading-6 italic">1 流, 1 selected, 1 not muted, start: 0.623986 s. Double click on graph to set start of playback.</p>

        <div className="mt-2 flex h-[34px] shrink-0 items-center px-[18px]">
          <button aria-label="播放" className={`flex h-8 w-[34px] items-center justify-center ${FACE}`}>
            <svg className="h-4 w-3.5" viewBox="0 0 14 16" fill="#1e1e1e"><path d="M0 0L14 8L0 16Z" /></svg>
          </button>
          <button aria-label="停止" className={`ml-[41px] flex h-8 w-[34px] items-center justify-center ${FACE}`}><span className="size-3.5 bg-[#3e3e3e]" /></button>
          <button aria-label="跳过静默" className={`ml-[41px] h-8 w-[34px] ${FACE}`} />
          <label htmlFor="silence" className="ml-10 w-[112px] whitespace-nowrap">Min silence:</label>
          <Spin id="silence" value="2" />
          <label htmlFor="device" className="ml-10 w-[101px] whitespace-nowrap">输出设备：</label>
          <Combo id="device" value="耳机 (2- Beats Studio Buds +)" className="flex-1" />
          <label htmlFor="rate" className="ml-[41px] w-[178px] whitespace-nowrap">Output Audio Rate:</label>
          <Combo id="rate" value="Automatic" className="-mr-px w-[131px]" />
        </div>

        <div className="mt-3 flex h-[34px] shrink-0 items-center pl-[17px]">
          <label htmlFor="jitter" className="w-[118px] whitespace-nowrap">抖动缓冲区：</label>
          <Spin id="jitter" value="50" />
          <label htmlFor="timing" className="ml-10 w-[100px] whitespace-nowrap">播放时间：</label>
          <Combo id="timing" value="抖动缓冲区" className="w-[135px]" />
          <label className="ml-10 flex items-center gap-2">
            <input type="checkbox" className="h-5 w-[19px] appearance-none border border-[#131313] bg-[#05203f]" />
            当天时间
          </label>
        </div>

        <div className="mt-[10px] flex h-[34px] shrink-0 items-stretch justify-end pr-[17px] whitespace-nowrap">
          <button disabled className={`w-[146px] text-[#949494] ${FACE}`}>Refresh streams</button>
          <button className={`ml-3 w-[175px] ${FACE}`}>Inaudible streams</button>
          <button aria-label="更多" className={`ml-0.5 flex w-[15px] items-center justify-center text-[#b8b8b8] ${FACE}`}><Caret /></button>
          <button className={`ml-[13px] w-[83px] ${FACE}`}>分析(A)</button>
          <button aria-label="更多分析" className={`ml-px flex w-4 items-center justify-center text-[#b8b8b8] ${FACE}`}><Caret /></button>
          <button className={`ml-[11px] w-[123px] ${FACE}`}>Prepare Filter</button>
          <button className={`ml-3 flex w-[117px] items-center justify-center gap-5 ${FACE}`}>Export<Caret className="h-[6px]! w-[9px]! text-[#b8b8b8]" /></button>
          <button className={`ml-3 w-[118px] ${FACE}`}>关闭</button>
          <button className={`ml-[11px] w-[118px] ${FACE}`}>帮助</button>
        </div>
      </div>

      <aside className="pointer-events-none absolute bottom-10 right-[120px] w-[290px] whitespace-nowrap text-white/50">
        <p className="text-[31px] leading-9">激活 Windows</p>
        <p className="text-[22px] leading-8">转到"设置"以激活 Windows。</p>
      </aside>

      <SaveDialog />
    </main>
  );
}
